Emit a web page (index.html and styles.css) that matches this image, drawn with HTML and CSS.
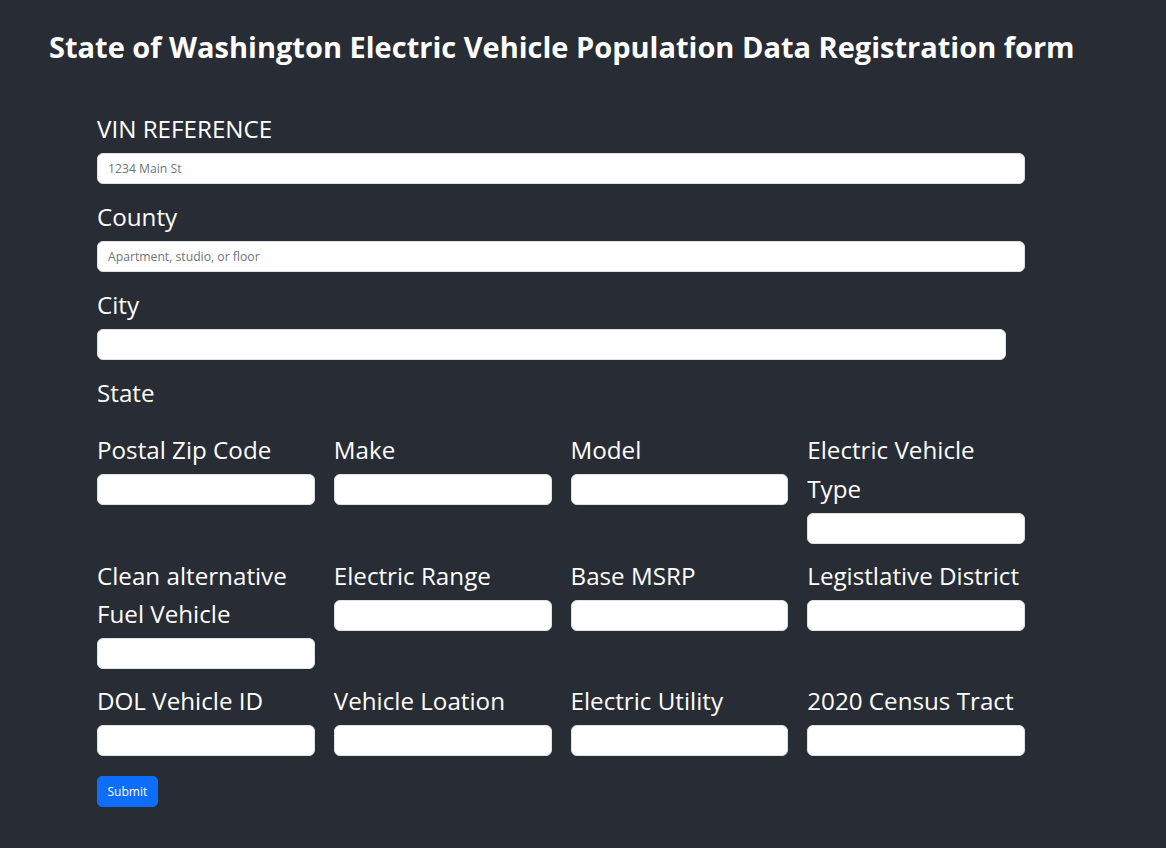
FILE: index.html
```html
<!DOCTYPE html>
<html lang="en">
<head>
<meta charset="utf-8">
<title>EV Registration form</title>
<link rel="stylesheet" href="styles.css">
</head>
<body>
<div class="app">
  <h1 class="title">State of Washington Electric Vehicle Population Data Registration form</h1>
  <form class="form">
    <div class="field">
      <label class="label">VIN REFERENCE</label>
      <input class="input" type="text" placeholder="1234 Main St">
    </div>
    <div class="field">
      <label class="label">County</label>
      <input class="input" type="text" placeholder="Apartment, studio, or floor">
    </div>
    <div class="field">
      <label class="label">City</label>
      <input class="input input-city" type="text">
    </div>
    <div class="field field-state">
      <label class="label">State</label>
    </div>
    <div class="grid">
      <div class="field"><label class="label">Postal Zip Code</label><input class="input" type="text"></div>
      <div class="field"><label class="label">Make</label><input class="input" type="text"></div>
      <div class="field"><label class="label">Model</label><input class="input" type="text"></div>
      <div class="field"><label class="label">Electric Vehicle Type</label><input class="input" type="text"></div>
      <div class="field"><label class="label">Clean alternative Fuel Vehicle</label><input class="input" type="text"></div>
      <div class="field"><label class="label">Electric Range</label><input class="input" type="text"></div>
      <div class="field"><label class="label">Base MSRP</label><input class="input" type="text"></div>
      <div class="field"><label class="label">Legistlative District</label><input class="input" type="text"></div>
      <div class="field"><label class="label">DOL Vehicle ID</label><input class="input" type="text"></div>
      <div class="field"><label class="label">Vehicle Loation</label><input class="input" type="text"></div>
      <div class="field"><label class="label">Electric Utility</label><input class="input" type="text"></div>
      <div class="field"><label class="label">2020 Census Tract</label><input class="input" type="text"></div>
    </div>
    <button class="submit" type="button">Submit</button>
  </form>
</div>
</body>
</html>
```
FILE: styles.css
```css
* { box-sizing: border-box; }
html, body { margin: 0; padding: 0; }
body {
  background: #282c34;
  color: #ffffff;
  font-family: "Segoe UI", "Open Sans", "Noto Sans", sans-serif;
  min-height: 848px;
}
.app {
  padding: 28px 0 40px 49px;
}
.title {
  margin: 0;
  font-size: 29px;
  font-weight: 700;
  line-height: 38px;
}
.form {
  width: 928px;
  margin: 44px 0 0 48px;
  display: flex;
  flex-direction: column;
  align-items: flex-start;
}
.field {
  display: flex;
  flex-direction: column;
  margin-bottom: 14px;
  width: 100%;
}
.field-state { margin-bottom: 18.5px; }
.label {
  font-size: 24.2px;
  line-height: 38.5px;
  margin-bottom: 4.5px;
  color: #ffffff;
}
.field-state .label { margin-bottom: 0; }
.input {
  width: 100%;
  height: 31px;
  border: 1px solid #dee2e6;
  border-radius: 6px;
  background: #ffffff;
  padding: 0 10px;
  font-family: inherit;
  font-size: 12.2px;
  color: #212529;
}
.input::placeholder { color: #6c757d; }
.input-city { width: 909px; }
.grid {
  width: 100%;
  display: grid;
  grid-template-columns: repeat(4, 1fr);
  column-gap: 19px;
  align-items: start;
}
.grid .field { margin-bottom: 13px; }
.submit {
  margin-top: 7px;
  height: 31px;
  padding: 0 9.5px;
  background: #0d6efd;
  color: #ffffff;
  border: 1px solid #0d6efd;
  border-radius: 5px;
  font-family: inherit;
  font-size: 12px;
}
```
